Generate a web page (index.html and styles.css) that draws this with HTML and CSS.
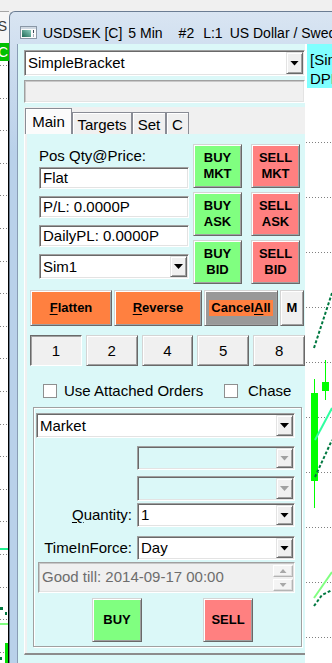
FILE: index.html
```html
<!DOCTYPE html>
<html>
<head>
<meta charset="utf-8">
<title>USDSEK [C] 5 Min</title>
<link rel="stylesheet" href="styles.css">
</head>
<body>
<div class="desk">
  <div class="back">
    <div class="back-top"></div>
    <div class="back-title"><span>S</span></div>
    <div class="back-tag"><span>C</span></div>
    <div class="back-plot">
      <svg width="8" height="602" viewBox="0 0 8 602">
        <path d="M0 4.5H8M0 37.5H8M0 69.5H8M0 102.5H8M0 134.5H8M0 167.5H8M0 200.5H8M0 232.5H8M0 265.5H8M0 297.5H8M0 330.5H8M0 363.5H8M0 395.5H8M0 428.5H8M0 460.5H8M0 493.5H8M0 526.5H8M0 558.5H8M0 591.5H8" stroke="#808080" stroke-dasharray="1 2"/>
        <rect x="0" y="487" width="8" height="2" fill="#20f090"/>
        <rect x="0" y="546" width="3" height="3" fill="#007840"/>
        <rect x="5" y="551" width="2" height="3" fill="#007840"/>
        <rect x="0" y="562" width="8" height="2" fill="#80ff80"/>
        <rect x="5" y="582" width="3" height="20" fill="#00e000"/>
        <rect x="0" y="596" width="2" height="3" fill="#007840"/>
      </svg>
    </div>
  </div>

  <div class="win">
    <div class="caption">
      <svg class="app-icon" width="17" height="13" viewBox="0 0 17 13">
        <defs>
          <linearGradient id="ig" x1="0" y1="1" x2="1" y2="0">
            <stop offset="0" stop-color="#1f6a55"/>
            <stop offset="1" stop-color="#8fd0c0"/>
          </linearGradient>
        </defs>
        <rect x="0.5" y="0.5" width="16" height="12" fill="#fbfbfb" stroke="#8a97a6"/>
        <rect x="1" y="1" width="15" height="2" fill="#cfd8e2"/>
        <rect x="2" y="4" width="9" height="7" fill="url(#ig)"/>
        <rect x="13" y="4" width="1" height="3" fill="#3c4a58"/>
        <rect x="13" y="8" width="1" height="3" fill="#a7b1bc"/>
      </svg>
      <span class="t1">USDSEK [C]</span><span class="t2">5 Min</span><span class="t3">#2</span><span class="t4">L:1</span><span>US Dollar / Swedish Krona</span>
    </div>

    <div class="client">
      <div class="panel">
        <div class="combo strategy"><span class="val">SimpleBracket</span><span class="drop"><i class="tri"></i></span></div>
        <div class="box-off"></div>

        <div class="tabctl">
          <div class="tabs">
            <div class="tab on">Main</div>
            <div class="tab w-tg">Targets</div>
            <div class="tab w-set">Set</div>
            <div class="tab w-c">C</div>
          </div>
          <div class="page">
            <div class="page-in">
              <div class="top">
                <div class="left">
                  <div class="lbl">Pos Qty@Price:</div>
                  <div class="field first">Flat</div>
                  <div class="field">P/L: 0.0000P</div>
                  <div class="field">DailyPL: 0.0000P</div>
                  <div class="combo acct"><span class="val">Sim1</span><span class="drop"><i class="tri"></i></span></div>
                </div>
                <div class="trade">
                  <div class="btn buy">BUY<br>MKT</div>
                  <div class="btn sell">SELL<br>MKT</div>
                  <div class="btn buy">BUY<br>ASK</div>
                  <div class="btn sell">SELL<br>ASK</div>
                  <div class="btn buy">BUY<br>BID</div>
                  <div class="btn sell">SELL<br>BID</div>
                </div>
              </div>

              <div class="actions">
                <div class="btn orange w-flat"><span><u>F</u>latten</span></div>
                <div class="btn orange w-rev"><span><u>R</u>everse</span></div>
                <div class="btn gray w-cxl"><span class="cxl">Cancel<u>A</u>ll</span></div>
                <div class="btn w-m">M</div>
              </div>

              <div class="nums">
                <div class="btn num down">1</div>
                <div class="btn num">2</div>
                <div class="btn num">4</div>
                <div class="btn num">5</div>
                <div class="btn num">8</div>
              </div>

              <div class="checks">
                <div class="chk first"><i class="box"></i>Use Attached Orders</div>
                <div class="chk"><i class="box"></i>Chase</div>
              </div>

              <div class="group">
                <div class="combo order-type"><span class="val">Market</span><span class="drop"><i class="tri"></i></span></div>
                <div class="combo off c1"><span class="val"></span><span class="drop"><i class="tri"></i></span></div>
                <div class="combo off c2"><span class="val"></span><span class="drop"><i class="tri"></i></span></div>
                <div class="row r-qty">
                  <span class="rl"><u>Q</u>uantity:</span>
                  <div class="combo"><span class="val">1</span><span class="drop"><i class="tri"></i></span></div>
                </div>
                <div class="row r-tif">
                  <span class="rl">TimeInForce:</span>
                  <div class="combo"><span class="val">Day</span><span class="drop"><i class="tri"></i></span></div>
                </div>
                <div class="spin">
                  <span class="spin-val">Good till: 2014-09-17 00:00</span>
                  <span class="spin-btns"><i class="sb"><i class="tri up"></i></i><i class="sb"><i class="tri"></i></i></span>
                </div>
                <div class="submit">
                  <div class="btn buy big">BUY</div>
                  <div class="btn sell big">SELL</div>
                </div>
              </div>
            </div>
          </div>
        </div>
      </div>

      <div class="plot">
        <svg class="plot-draw" width="27" height="619" viewBox="0 0 27 619">
          <path d="M1 98.5H27M1 153.5H27M1 208.5H27M1 263.5H27M1 318.5H27M1 373.5H27M1 428.5H27M1 483.5H27M1 538.5H27M1 593.5H27" stroke="#808080" stroke-dasharray="1 2"/>
          <path d="M9 304L27 249" stroke="#007840" stroke-width="2" stroke-dasharray="3 2" fill="none"/>
          <path d="M9.5 335V464M20.5 316V356" stroke="#00ff00" stroke-width="1"/>
          <rect x="6" y="349" width="7" height="88" fill="#00ff00"/>
          <rect x="17" y="338" width="7" height="9" fill="#00ff00"/>
          <path d="M10 396L27 364" stroke="#30ffa0" stroke-width="2" fill="none"/>
          <path d="M10 433L27 396" stroke="#007840" stroke-width="2" stroke-dasharray="3 2" fill="none"/>
          <path d="M9 554L27 528" stroke="#80ff80" stroke-width="2" fill="none"/>
          <path d="M9 562L17 551L27 546" stroke="#007840" stroke-width="2" stroke-dasharray="3 2" fill="none"/>
        </svg>
        <div class="tag">
          <div>[SimpleBracket]</div>
          <div>DPL: 0.0000P</div>
        </div>
      </div>
    </div>
  </div>
</div>
</body>
</html>
```

FILE: styles.css
```css
* {
  margin: 0;
  padding: 0;
  box-sizing: border-box;
}

body {
  font-family: "Liberation Sans", Arial, sans-serif;
  font-size: 15px;
  color: #000;
  background: #f0f0f0;
  overflow: hidden;
}

u {
  text-decoration: underline;
  text-underline-offset: 2px;
}

.desk {
  display: flex;
  width: 332px;
  height: 663px;
  overflow: hidden;
}

/* chart window behind, only a sliver shows */
.back {
  width: 9px;
  flex-shrink: 0;
  display: flex;
  flex-direction: column;
}

.back-top {
  height: 12px;
  border-bottom: 1px solid #a6a6a6;
}

.back-title {
  height: 31px;
  display: flex;
  justify-content: flex-end;
  padding: 6px 2px 0 0;
  background: #f6f6f6;
  overflow: hidden;
  font-size: 14px;
  color: #3a3a3a;
  line-height: 16px;
}

.back-tag {
  height: 18px;
  display: flex;
  justify-content: flex-end;
  padding-right: 1px;
  background: #00c000;
  color: #fff;
  overflow: hidden;
  font-size: 14px;
  line-height: 18px;
}

.back-plot {
  flex: 1;
  background: #fff;
  border-right: 1px solid #000;
}

.back-plot svg {
  display: block;
}

/* main window */
.win {
  flex: 1;
  min-width: 0;
  margin-top: 11px;
  display: flex;
  flex-direction: column;
  border-top: 1px solid #6b7d93;
  border-left: 1px solid #6b7d93;
  border-top-left-radius: 6px;
  background: linear-gradient(#d9e5f2 0, #cadbee 60px, #bfd4eb 120px, #b9d1ea 140px);
}

.caption {
  height: 32px;
  display: flex;
  align-items: center;
  padding: 9px 0 0 10px;
  font-size: 14px;
  line-height: 16px;
  white-space: nowrap;
  overflow: hidden;
}

.app-icon {
  flex-shrink: 0;
  margin-right: 6px;
}

.t1 { margin-right: 6px; }
.t2 { margin-right: 16px; }
.t3 { margin-right: 9px; }
.t4 { margin-right: 7px; }

.client {
  flex: 1;
  min-height: 0;
  display: flex;
  margin-left: 7px;
  border-left: 1px solid #8a9db5;
}

.panel {
  width: 287px;
  flex-shrink: 0;
  background: #dbf8f8;
  padding: 6px 0 0 6px;
}

/* classic sunken combo */
.combo {
  display: flex;
  height: 25px;
  background: #fff;
  border: 1px solid;
  border-color: #a0a0a0 #fff #fff #a0a0a0;
  padding: 1px;
  box-shadow: inset 1px 1px 0 #696969, inset -1px -1px 0 #e3e3e3;
}

.combo .val {
  flex: 1;
  padding-left: 2px;
  line-height: 21px;
  white-space: nowrap;
  overflow: hidden;
}

.drop {
  width: 17px;
  display: flex;
  align-items: center;
  justify-content: center;
  background: #f0f0f0;
  border: 1px solid;
  border-color: #e3e3e3 #696969 #696969 #e3e3e3;
  box-shadow: inset 1px 1px 0 #fff, inset -1px -1px 0 #a0a0a0;
}

.tri {
  width: 9px;
  height: 5px;
  background: #000;
  clip-path: polygon(0 0, 100% 0, 50% 100%);
}

.strategy {
  height: 26px;
}

.strategy .val {
  line-height: 22px;
}

.box-off {
  height: 23px;
  margin-top: 4px;
  background: #f0f0f0;
  border: 1px solid;
  border-color: #a0a0a0 #fff #fff #a0a0a0;
  box-shadow: inset 1px 1px 0 #c8c8c8, inset -1px -1px 0 #e3e3e3;
}

/* tab control */
.tabctl {
  margin-top: 4px;
  background: #f0f0f0;
}

.tabs {
  height: 27px;
  display: flex;
  align-items: flex-end;
}

.tab {
  height: 22px;
  padding-top: 3px;
  text-align: center;
  line-height: 18px;
  background: #f0f0f0;
  border: 1px solid #898c95;
  border-bottom: none;
  box-shadow: inset 1px 1px 0 #fff;
}

.tab.on {
  width: 47px;
  height: 26px;
  margin-left: 1px;
  padding-top: 4px;
  background: #fbfbfb;
}

.w-tg { width: 60px; }
.w-set { width: 34px; }
.w-c { width: 23px; }

.page {
  padding-left: 2px;
  border-left: 1px solid #fff;
  border-bottom: 2px solid #8c8c8c;
}

.page-in {
  height: 519px;
  background: #dbf8f8;
}

.top {
  display: flex;
  padding: 10px 0 0 12px;
}

.left {
  width: 150px;
}

.lbl {
  margin-top: 2px;
  line-height: 20px;
}

.field {
  height: 22px;
  margin-top: 7px;
  padding: 1px 0 0 3px;
  line-height: 18px;
  background: #fff;
  border: 1px solid;
  border-color: #a0a0a0 #fff #fff #a0a0a0;
  box-shadow: inset 1px 1px 0 #696969, inset -1px -1px 0 #e3e3e3;
  white-space: nowrap;
}

.field.first {
  margin-top: 1px;
}

.acct {
  margin-top: 7px;
}

.trade {
  margin-left: 4px;
  display: grid;
  grid-template-columns: 49px 49px;
  grid-auto-rows: 44px;
  column-gap: 9px;
  row-gap: 4px;
}

/* raised buttons */
.btn {
  display: flex;
  align-items: center;
  justify-content: center;
  text-align: center;
  font-weight: bold;
  font-size: 13px;
  line-height: 16px;
  background: #f0f0f0;
  border: 1px solid;
  border-color: #d4d4d4 #696969 #696969 #d4d4d4;
  box-shadow: inset 1px 1px 0 #fff, inset -1px -1px 0 #a0a0a0;
}

.buy { background: #80ff80; }
.sell { background: #ff8080; }
.orange { background: #ff8040; }
.gray { background: #999; }

.actions {
  display: flex;
  gap: 2px;
  height: 36px;
  margin: 6px 0 0 3px;
}

.w-flat { width: 82px; }
.w-rev { width: 88px; }
.w-cxl { width: 74px; }
.w-m { width: 24px; }

.cxl {
  background: #ff8040;
  padding: 0 2px;
  line-height: 16px;
}

.nums {
  display: flex;
  gap: 4px;
  height: 31px;
  margin: 9px 0 0 3px;
}

.num {
  flex: 1;
  font-weight: normal;
  font-size: 15px;
}

.num.down {
  border-color: #696969 #fff #fff #696969;
  box-shadow: inset 1px 1px 0 #a0a0a0;
}

.checks {
  display: flex;
  height: 17px;
  margin-top: 16px;
  line-height: 17px;
}

.chk {
  display: flex;
  align-items: center;
  white-space: nowrap;
}

.chk.first {
  width: 181px;
  margin-left: 16px;
}

.box {
  width: 14px;
  height: 14px;
  margin-right: 7px;
  background: #fff;
  border: 1px solid #8e8f8f;
}

.chk:not(.first) .box {
  margin-right: 10px;
}

/* order entry group */
.group {
  width: 269px;
  height: 240px;
  margin: 8px 0 0 6px;
  border: 1px solid #a0a0a0;
  box-shadow: inset 1px 1px 0 #fff, 1px 1px 0 #fff;
}

.order-type {
  width: 259px;
  margin: 5px 0 0 2px;
}

.combo.off {
  width: 158px;
  margin-left: 103px;
  background: #dbf8f8;
}

.combo.off .tri {
  background: #a0a0a0;
}

.c1 {
  height: 24px;
  margin-top: 8px;
}

.c2 {
  margin-top: 6px;
}

.row {
  display: flex;
  height: 24px;
}

.row .combo {
  width: 158px;
  height: 24px;
  margin-left: 4px;
}

.row .combo .val {
  line-height: 20px;
}

.rl {
  width: 99px;
  padding-right: 1px;
  text-align: right;
  line-height: 24px;
}

.r-qty { margin-top: 2px; }
.r-tif { margin-top: 9px; }

.spin {
  display: flex;
  width: 257px;
  height: 31px;
  margin: 2px 0 0 4px;
  padding: 1px;
  background: #f0f0f0;
  border: 1px solid;
  border-color: #a0a0a0 #fff #fff #a0a0a0;
  box-shadow: inset 1px 1px 0 #c8c8c8, inset -1px -1px 0 #e3e3e3;
}

.spin-val {
  flex: 1;
  padding: 3px 0 0 2px;
  line-height: 19px;
  color: #6d6d6d;
  white-space: nowrap;
}

.spin-btns {
  width: 20px;
  display: flex;
  flex-direction: column;
  gap: 2px;
  padding-top: 1px;
}

.sb {
  height: 12px;
  display: flex;
  align-items: center;
  justify-content: center;
  background: #f4f4f4;
  border: 1px solid;
  border-color: #fff #b4b4b4 #b4b4b4 #fff;
  box-shadow: inset -1px -1px 0 #dcdcdc;
}

.sb .tri {
  width: 7px;
  height: 4px;
  background: #a8a8a8;
}

.sb .tri.up {
  clip-path: polygon(50% 0, 100% 100%, 0 100%);
}

.submit {
  display: flex;
  height: 44px;
  margin-top: 5px;
}

.big {
  width: 50px;
  font-size: 13px;
}

.big.buy { margin-left: 58px; }
.big.sell { margin-left: 61px; }

/* chart beside the panel */
.plot {
  flex: 1;
  min-width: 0;
  position: relative;
  background: #fff;
  overflow: hidden;
}

.plot-draw {
  position: absolute;
  left: 0;
  top: 0;
}

.tag {
  position: relative;
  width: 60px;
  height: 44px;
  margin-left: 2px;
  padding: 6px 0 0 3px;
  background: #80ffff;
  line-height: 19px;
  white-space: nowrap;
}
```
